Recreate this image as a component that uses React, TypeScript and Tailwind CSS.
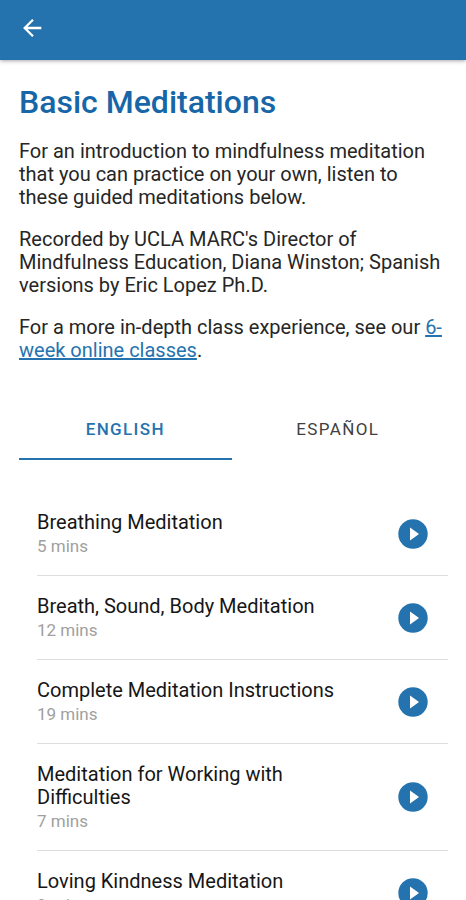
import React from "react";

const items = [
  { title: "Breathing Meditation", mins: "5 mins" },
  { title: "Breath, Sound, Body Meditation", mins: "12 mins" },
  { title: "Complete Meditation Instructions", mins: "19 mins" },
  { title: "Meditation for Working with Difficulties", mins: "7 mins" },
  { title: "Loving Kindness Meditation", mins: "9 mins" },
];

export default function App() {
  return (
    <div className="h-screen overflow-hidden bg-white font-['Roboto',sans-serif] text-[#262626]">
      <header className="flex h-[60px] items-center bg-[#2573ae] px-5 pb-1 shadow-[0_1px_4px_rgba(0,0,0,0.35)]">
        <button type="button" aria-label="Back" className="text-white">
          <svg viewBox="0 0 24 24" className="size-6" fill="none" stroke="currentColor" strokeWidth="2.3">
            <path d="M21.3 12H5M13 3.7 4.7 12l8.3 8.3" />
          </svg>
        </button>
      </header>
      <main className="pl-[19px] pr-[18px]">
        <h1 className="pt-6 text-[32px] leading-9 font-medium text-[#1766a8]">Basic Meditations</h1>
        <div className="flex flex-col gap-[19px] pt-5 text-xl leading-[23px]">
          <p>For an introduction to mindfulness meditation that you can practice on your own, listen to these guided meditations below.</p>
          <p>Recorded by UCLA MARC's Director of Mindfulness Education, Diana Winston; Spanish versions by Eric Lopez Ph.D.</p>
          <p>
            For a more in-depth class experience, see our{" "}
            <a href="#classes" className="text-[#2573ae] underline">6-week online classes</a>.
          </p>
        </div>
        <div role="tablist" className="mt-10 mr-1 grid grid-cols-2 text-[17px] tracking-[0.08em]">
          <button type="button" role="tab" aria-selected="true" className="h-[58px] border-b-2 border-[#2573ae] font-medium text-[#2573ae]">ENGLISH</button>
          <button type="button" role="tab" aria-selected="false" className="h-[58px] border-b-2 border-transparent text-[#404040]">ESPAÑOL</button>
        </div>
        <ul className="mt-8 pl-[18px]">
          {items.map((item) => (
            <li key={item.title} className="flex items-center justify-between border-b border-[#dedede] py-4 pr-5">
              <div className="w-[300px] pt-[3px]">
                <h2 className="text-xl leading-[23px] text-[#161616]">{item.title}</h2>
                <p className="text-[17px] leading-[25px] text-[#a0a0a0]">{item.mins}</p>
              </div>
              <button type="button" aria-label={"Play " + item.title}>
                <svg viewBox="0 0 30 30" className="size-[30px]">
                  <circle cx="15" cy="15" r="14.7" fill="#2573ae" />
                  <path d="M12 8.5v13l9-6.5z" fill="#fff" />
                </svg>
              </button>
            </li>
          ))}
        </ul>
      </main>
    </div>
  );
}
